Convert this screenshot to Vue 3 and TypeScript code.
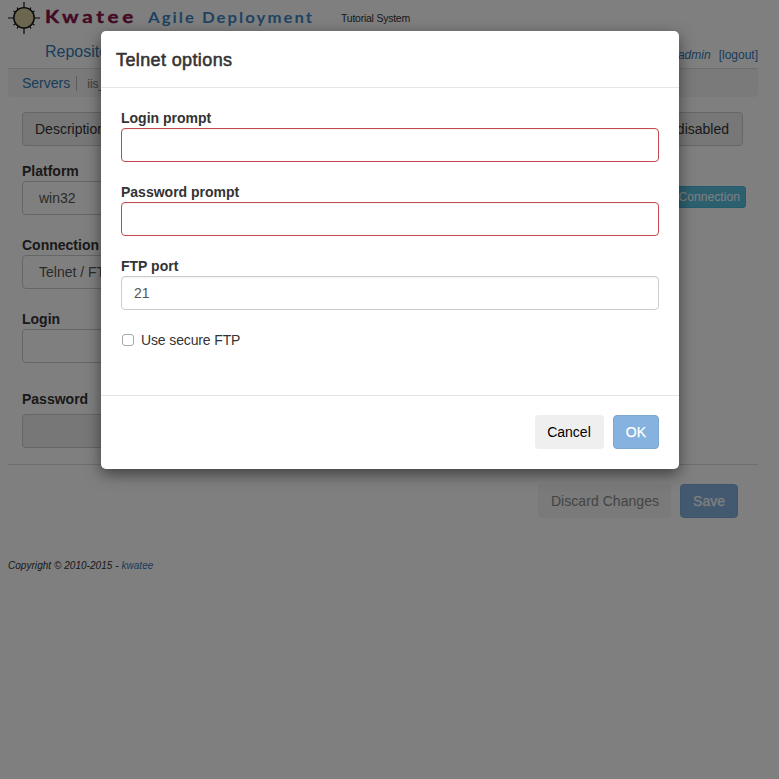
<script setup lang="ts">
import { ref } from 'vue'

interface Field {
  label: string
  value: string
  kind: 'select' | 'input' | 'disabled'
}

const serverFields: Field[] = [
  { label: 'Platform', value: 'win32', kind: 'select' },
  { label: 'Connection', value: 'Telnet / FTP', kind: 'select' },
  { label: 'Login', value: '', kind: 'input' },
  { label: 'Password', value: '', kind: 'disabled' },
]

const loginPrompt = ref('')
const passwordPrompt = ref('')
const ftpPort = ref('21')
const secureFtp = ref(false)
</script>

<template>
  <div class="screen">
    <div class="page">
      <header class="brand">
        <svg class="logo" width="32" height="34" viewBox="0 0 32 34">
          <path d="M0 18H32M16 2V34" stroke="#111" stroke-width="1.2" />
          <g fill="none" stroke="#111" stroke-width="1.2">
            <path d="M8 12.500L5.500 11M10.500 10L9 7.500" />
            <path d="M24 12.500L26.500 11M21.500 10L23 7.500" />
            <path d="M8 23.500L5.500 25M10.500 26L9 28.500" />
            <path d="M24 23.500L26.500 25M21.500 26L23 28.500" />
          </g>
          <circle cx="16" cy="17.800" r="10.2" fill="#d9cd9c" stroke="#111" stroke-width="1.4" />
        </svg>
        <svg class="wordmark" width="270" height="30" viewBox="0 0 270 30">
          <text class="kwatee" x="0" y="22.5" textLength="92" lengthAdjust="spacingAndGlyphs">Kwatee</text>
          <text class="agile" x="103" y="23" textLength="166" lengthAdjust="spacingAndGlyphs">Agile Deployment</text>
        </svg>
        <span class="system">Tutorial System</span>
      </header>

      <nav class="nav">
        <a class="nav-link">Repository</a>
        <span class="account"><a><i>admin</i></a><a>[logout]</a></span>
      </nav>

      <div class="crumbs"><a>Servers</a><span>iis_server</span></div>

      <main class="content">
        <div class="description"><span>Description</span><span>disabled</span></div>
        <div class="form">
          <div class="fields">
            <div v-for="f in serverFields" :key="f.label" class="field" :class="f.kind">
              <label>{{ f.label }}</label>
              <div class="control">{{ f.value }}</div>
            </div>
          </div>
          <button class="test">Test Connection</button>
        </div>
      </main>

      <div class="actions">
        <button class="btn discard">Discard Changes</button>
        <button class="btn primary">Save</button>
      </div>
      <footer class="copyright">Copyright © 2010-2015 - <a>kwatee</a></footer>
    </div>

    <div class="backdrop">
      <section class="modal" role="dialog">
        <h4 class="modal-title"><span>Telnet options</span></h4>
        <div class="modal-body">
          <div class="group">
            <label>Login prompt</label>
            <input v-model="loginPrompt" class="invalid" type="text" />
          </div>
          <div class="group">
            <label>Password prompt</label>
            <input v-model="passwordPrompt" class="invalid" type="text" />
          </div>
          <div class="group">
            <label>FTP port</label>
            <input v-model="ftpPort" type="text" />
          </div>
          <label class="check"><input v-model="secureFtp" type="checkbox" /><span>Use secure FTP</span></label>
        </div>
        <div class="modal-footer">
          <button class="btn cancel">Cancel</button>
          <button class="btn primary">OK</button>
        </div>
      </section>
    </div>
  </div>
</template>

<style>
body {
  margin: 0;
  background: #fff;
}
</style>

<style scoped>
.screen,
.screen * {
  box-sizing: border-box;
}
.screen {
  position: relative;
  height: 779px;
  overflow: hidden;
  font: 14px/20px "Liberation Sans", Arial, sans-serif;
  color: #333;
}
.page {
  width: 750px;
  margin-left: 8px;
}
a {
  color: #337ab7;
}
button,
input {
  font: inherit;
  margin: 0;
}
.brand {
  display: flex;
  height: 36px;
}
.logo {
  flex: none;
}
.wordmark {
  flex: none;
  margin-left: 5px;
}
.wordmark text {
  font-family: Lato, sans-serif;
}
.kwatee {
  font-size: 16.5px;
  font-weight: 700;
  letter-spacing: 3px;
  fill: #861548;
  stroke: #861548;
  stroke-width: 0.4px;
}
.agile {
  font-size: 15px;
  font-weight: 700;
  letter-spacing: 1.8px;
  fill: #3f87c5;
}
.system {
  margin: 8px 0 0 26px;
  font-size: 10.5px;
  letter-spacing: -0.24px;
}
.nav {
  display: flex;
  justify-content: space-between;
  height: 32px;
  padding-left: 37px;
}
.nav-link {
  padding-top: 6px;
  font-size: 16px;
}
.account {
  display: flex;
  gap: 8px;
  padding-top: 9px;
  font-size: 12px;
}
.crumbs {
  display: flex;
  height: 29px;
  padding-left: 14px;
  border-top: 1px solid #ddd;
  border-radius: 0 0 4px 4px;
  background: #f5f5f5;
  line-height: 28px;
}
.crumbs span {
  height: 15px;
  margin: 7px 0 0 6px;
  padding-left: 10px;
  border-left: 1px solid #bbb;
  font-size: 12px;
  line-height: 16px;
  color: #777;
}
.content {
  height: 368px;
  padding: 15px 15px 0 14px;
  border-bottom: 1px solid #ddd;
}
.description {
  display: flex;
  justify-content: space-between;
  height: 34px;
  padding: 0 13px 0 12px;
  border: 1px solid #ccc;
  border-radius: 4px;
  background: #eee;
  line-height: 32px;
}
.form {
  display: flex;
  justify-content: space-between;
  padding-top: 15px;
}
.fields {
  width: 560px;
}
.field {
  height: 74px;
}
.field label {
  display: block;
  font-weight: 700;
}
.control {
  height: 34px;
  padding-left: 16px;
  border: 1px solid #ccc;
  border-radius: 4px;
  line-height: 32px;
  color: #555;
}
.disabled {
  padding-top: 6px;
}
.disabled .control {
  margin-top: 5px;
  background: #eee;
}
.test {
  height: 22px;
  margin: 25px -3px 0 0;
  padding: 0 5px;
  border: 1px solid #46b8da;
  border-radius: 3px;
  background: #5bc0de;
  color: #fff;
  font-size: 12px;
  line-height: 20px;
  letter-spacing: 0.08px;
}
.actions,
.modal-footer {
  display: flex;
  justify-content: flex-end;
  gap: 9px;
}
.actions {
  padding: 19px 20px 0 0;
}
.btn {
  height: 34px;
  padding: 0 12px;
  border: 1px solid transparent;
  border-radius: 4px;
  line-height: 32px;
}
.cancel {
  padding: 0 12px 0 11px;
  background: #efefef;
  color: #000;
}
.discard {
  padding: 0 11px 0 12px;
  background: #f5f5f5;
  color: #888;
  letter-spacing: 0.05px;
}
.primary {
  border-color: #7ba9d3;
  background: #85b2de;
  color: #fff;
  -webkit-text-stroke: 0.25px #fff;
}
.copyright {
  padding-top: 38px;
  font-size: 10px;
  font-style: italic;
  letter-spacing: 0.04px;
}
.backdrop {
  position: absolute;
  inset: 0;
  padding: 31px 100px 0 101px;
  background: rgba(0, 0, 0, 0.5);
}
.modal {
  height: 438px;
  border-radius: 5px;
  background: #fff;
  box-shadow: 0 5px 15px rgba(0, 0, 0, 0.5);
}
.modal-title {
  height: 57px;
  margin: 0;
  padding: 16px 15px 0;
  border-bottom: 1px solid #e5e5e5;
  font-size: 18px;
  line-height: 26px;
  font-weight: 400;
  letter-spacing: 0.38px;
  -webkit-text-stroke: 0.55px #333;
}
.modal-body {
  height: 307px;
  padding: 20px;
}
.group {
  height: 74px;
}
.group label {
  display: block;
  font-weight: 700;
}
.group input {
  display: block;
  width: 100%;
  height: 34px;
  padding: 0 12px;
  border: 1px solid #ccc;
  border-radius: 4px;
  outline: none;
  box-shadow: inset 0 1px 1px rgba(0, 0, 0, 0.05);
  color: #555;
}
.group input.invalid {
  border-color: #c34a4e;
}
.check {
  display: flex;
  align-items: center;
  gap: 7px;
  letter-spacing: -0.13px;
}
.check input {
  appearance: none;
  width: 12px;
  height: 12px;
  margin-left: 1px;
  border: 1px solid #aaa;
  border-radius: 3px;
  background: #fff;
}
.modal-footer {
  padding: 19px 20px 0;
  border-top: 1px solid #e5e5e5;
}
</style>
